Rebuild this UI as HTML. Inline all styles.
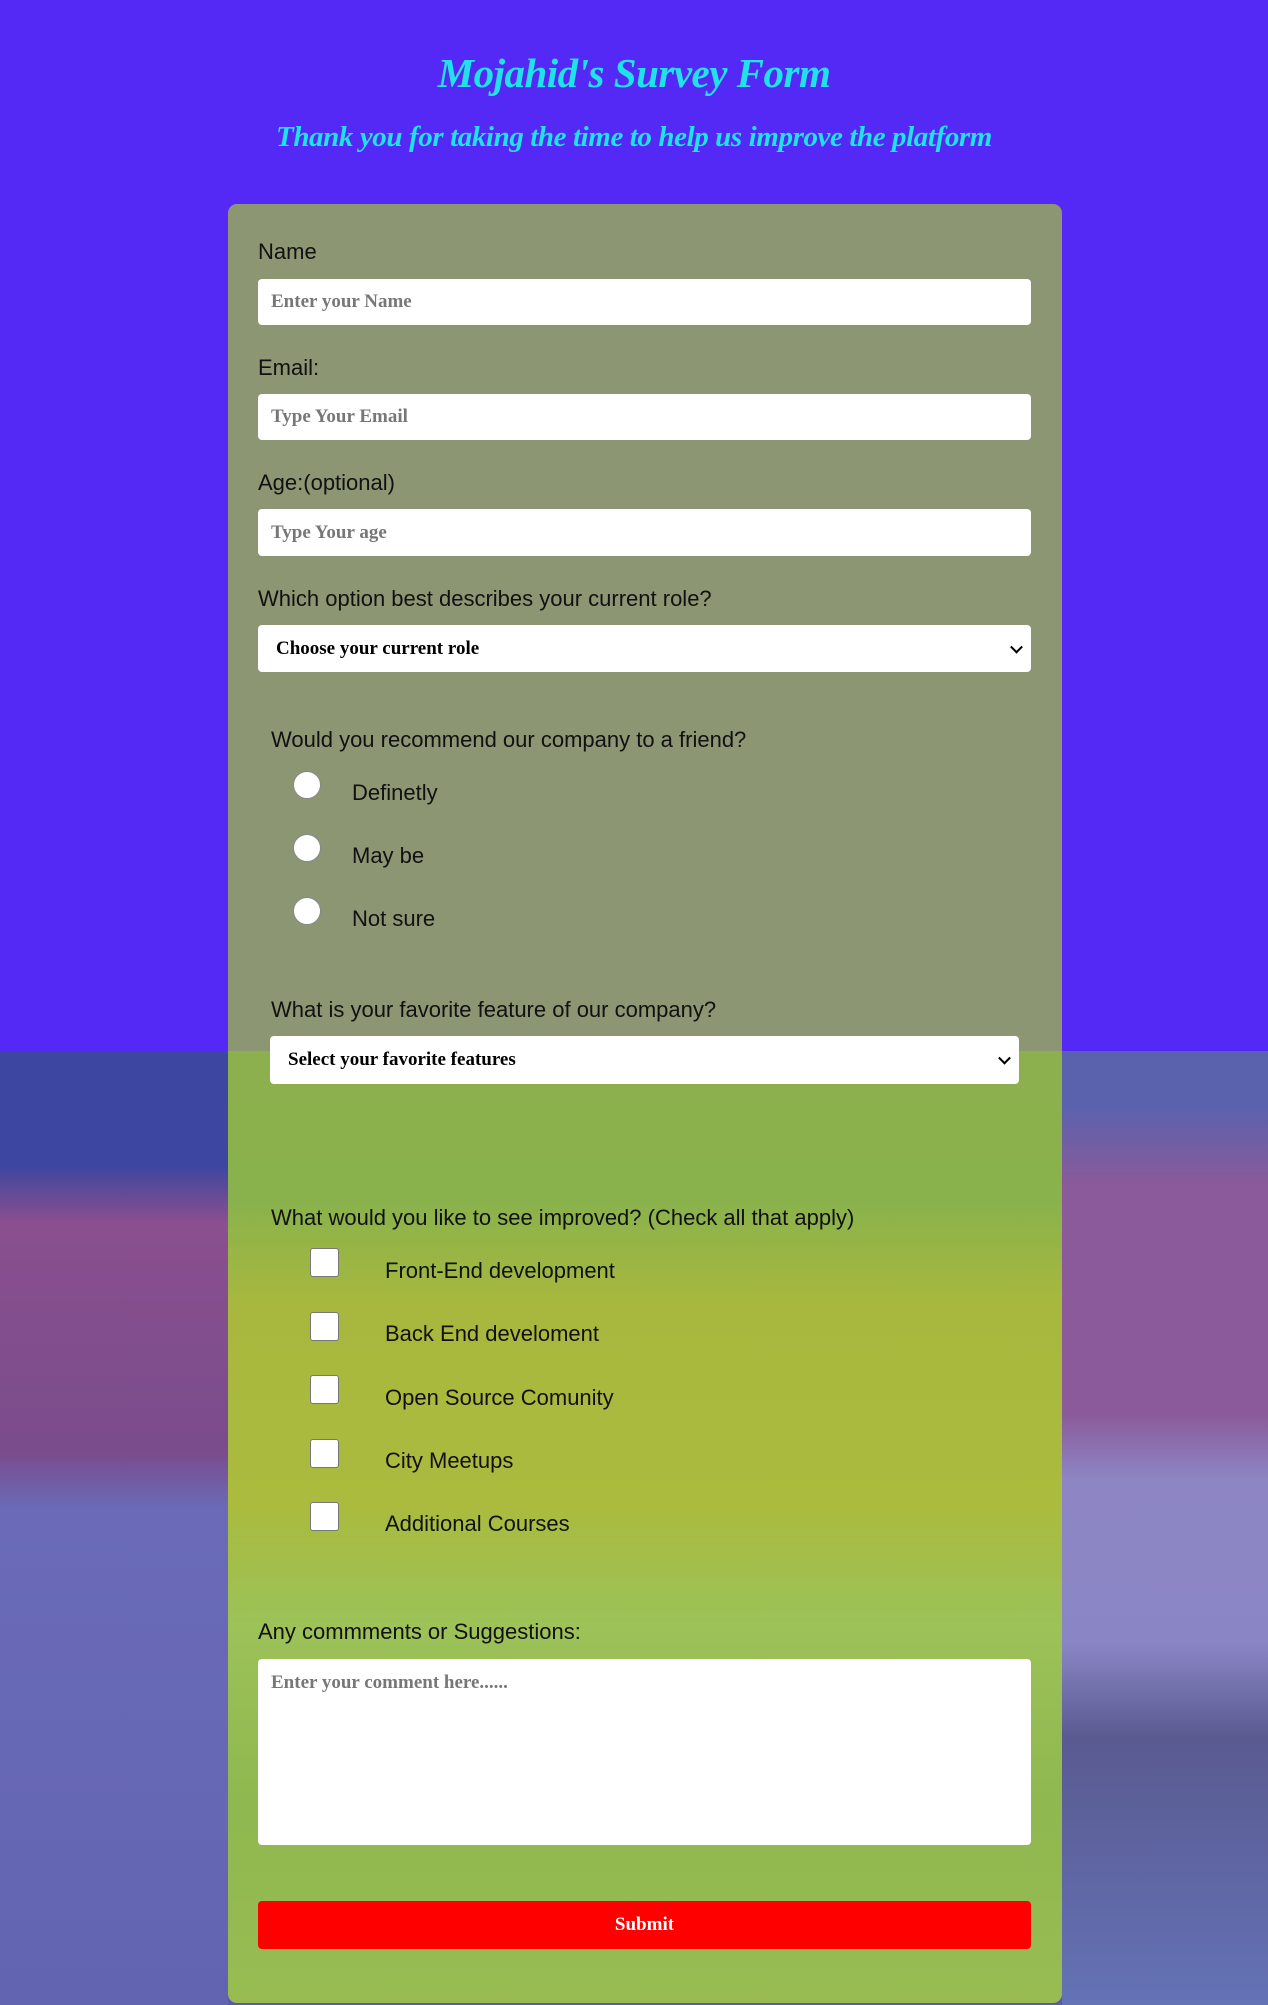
<!DOCTYPE html>
<html><head><meta charset="utf-8"><style>
*{box-sizing:border-box;margin:0;padding:0}
body{width:1268px;height:2005px;overflow:hidden;position:relative;font-family:"Liberation Sans",sans-serif;background:#5529f5}
.bg{position:absolute;left:0;top:1051px;width:1268px;height:954px;background:#5a5aa8}
.bg2{position:absolute;left:1062px;top:1051px;width:206px;height:954px;background:linear-gradient(180deg,#5b62ad 0,#5b62ad 6%,#8a5a9a 14%,#8a5a9a 38%,#8e86c4 45%,#8a86c6 62%,#5a5a90 72%,#6472b6 100%)}
.bg3{position:absolute;left:0;top:1051px;width:228px;height:954px;background:linear-gradient(180deg,#3d46a0 0,#3d46a0 12%,#8a4f8e 18%,#7a4c8c 42%,#6a6ab8 48%,#6264b2 100%)}
h1{position:absolute;top:49px;width:100%;text-align:center;font-family:"Liberation Serif",serif;font-style:italic;font-weight:bold;font-size:41px;color:#1fe3e8;letter-spacing:-0.5px}
h2{position:absolute;top:121px;width:100%;text-align:center;font-family:"Liberation Serif",serif;font-style:italic;font-weight:bold;font-size:29px;color:#1fe3e8;letter-spacing:-0.4px}
.form{position:absolute;left:228px;top:204px;width:834px;height:1799px;border-radius:9px;background:linear-gradient(180deg,#8d9673 0,#8d9673 847px,#8cb04e 847px,#8ab24c 1000px,#a8b83e 1100px,#aabb3e 1300px,#9cc258 1420px,#8fb850 1600px,#98bc52 100%)}
.l{position:absolute;font-size:22px;color:#111}
.in{position:absolute;background:#fff;border-radius:4px;font-family:"Liberation Serif",serif;font-weight:bold;font-size:19px;color:#777;padding-left:13px;display:flex;align-items:center}
.sel{color:#000;padding-left:18px}
.sel:after{content:"";position:absolute;right:10px;top:50%;width:7px;height:7px;border-right:2px solid #000;border-bottom:2px solid #000;transform:translateY(-70%) rotate(45deg)}
.r{position:absolute;width:28px;height:28px;border-radius:50%;background:#fff;border:1px solid #888}
.c{position:absolute;width:29px;height:29px;border-radius:3px;background:#fff;border:1px solid #777}
</style></head><body>
<div class="bg"></div><div class="bg3"></div><div class="bg2"></div>
<h1>Mojahid's Survey Form</h1>
<h2>Thank you for taking the time to help us improve the platform</h2>
<div class="form"></div>
<div class="l" style="left:258px;top:239px">Name</div>
<div class="in" style="left:258px;top:279px;width:773px;height:46px">Enter your Name</div>
<div class="l" style="left:258px;top:355px">Email:</div>
<div class="in" style="left:258px;top:394px;width:773px;height:46px">Type Your Email</div>
<div class="l" style="left:258px;top:470px">Age:(optional)</div>
<div class="in" style="left:258px;top:509px;width:773px;height:47px">Type Your age</div>
<div class="l" style="left:258px;top:586px">Which option best describes your current role?</div>
<div class="in sel" style="left:258px;top:625px;width:773px;height:47px">Choose your current role</div>
<div class="l" style="left:271px;top:727px">Would you recommend our company to a friend?</div>
<div class="r" style="left:293px;top:771px"></div><div class="l" style="left:352px;top:780px">Definetly</div>
<div class="r" style="left:293px;top:834px"></div><div class="l" style="left:352px;top:843px">May be</div>
<div class="r" style="left:293px;top:897px"></div><div class="l" style="left:352px;top:906px">Not sure</div>
<div class="l" style="left:271px;top:997px">What is your favorite feature of our company?</div>
<div class="in sel" style="left:270px;top:1036px;width:749px;height:48px">Select your favorite features</div>
<div class="l" style="left:271px;top:1205px">What would you like to see improved? (Check all that apply)</div>
<div class="c" style="left:310px;top:1248px"></div><div class="l" style="left:385px;top:1258px">Front-End development</div>
<div class="c" style="left:310px;top:1312px"></div><div class="l" style="left:385px;top:1321px">Back End develoment</div>
<div class="c" style="left:310px;top:1375px"></div><div class="l" style="left:385px;top:1385px">Open Source Comunity</div>
<div class="c" style="left:310px;top:1439px"></div><div class="l" style="left:385px;top:1448px">City Meetups</div>
<div class="c" style="left:310px;top:1502px"></div><div class="l" style="left:385px;top:1511px">Additional Courses</div>
<div class="l" style="left:258px;top:1619px">Any commments or Suggestions:</div>
<div class="in" style="left:258px;top:1659px;width:773px;height:186px;align-items:flex-start;padding-top:13px">Enter your comment here......</div>
<div style="position:absolute;left:258px;top:1901px;width:773px;height:48px;background:#ff0000;border-radius:4px;color:#fff;font-family:'Liberation Serif',serif;font-weight:bold;font-size:19px;display:flex;align-items:center;justify-content:center">Submit</div>
</body></html>
